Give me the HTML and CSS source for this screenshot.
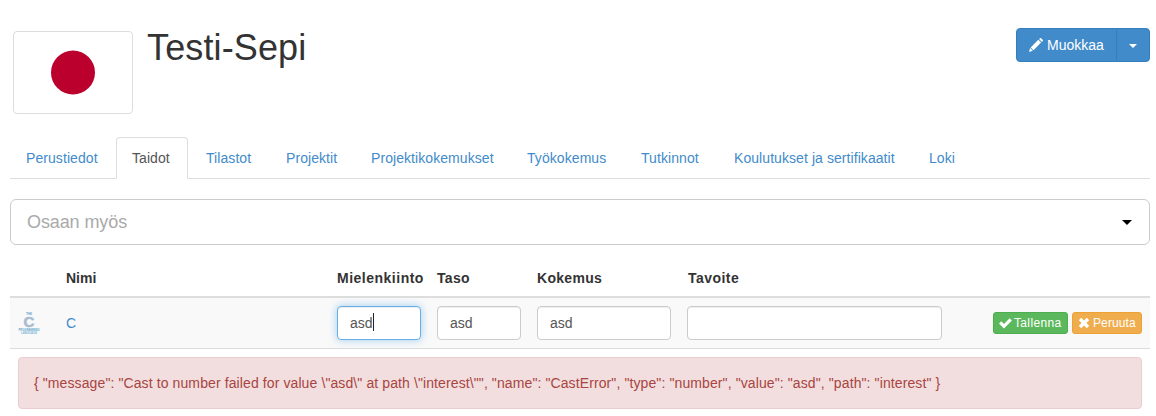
FILE: index.html
```html
<!DOCTYPE html>
<html lang="fi">
<head>
<meta charset="utf-8">
<title>Testi-Sepi</title>
<link rel="stylesheet" href="styles.css">
</head>
<body>
<main class="container">
  <header class="profile">
    <div class="thumbnail"><svg width="110" height="73" viewBox="0 0 110 73"><circle cx="55" cy="36.5" r="22" fill="#bc002d"/></svg></div>
    <h1 class="name">Testi-Sepi</h1>
    <div class="btn-group">
      <button class="btn btn-main"><svg class="pencil" width="14" height="14" viewBox="0 0 14 14"><path fill="#fff" d="M10.1 1.1 11 .2q.6-.4 1.1 0l1.7 1.7q.4.6 0 1.1l-.9.9zM9.3 1.8l2.8 2.8-7.6 7.6-2.8-2.8zM1.1 10.1l2.7 2.7-3.8 1.1z"/></svg><span>Muokkaa</span></button>
      <button class="btn btn-toggle" aria-label="Valikko"><span class="caret"></span></button>
    </div>
  </header>
  <nav class="tabs">
    <a class="tab t1">Perustiedot</a>
    <a class="tab t2 active">Taidot</a>
    <a class="tab t3">Tilastot</a>
    <a class="tab t4">Projektit</a>
    <a class="tab t5">Projektikokemukset</a>
    <a class="tab t6">Työkokemus</a>
    <a class="tab t7">Tutkinnot</a>
    <a class="tab t8">Koulutukset ja sertifikaatit</a>
    <a class="tab t9">Loki</a>
  </nav>
  <div class="select"><span>Osaan myös</span><svg width="10" height="5" viewBox="0 0 10 5"><path d="M0 0h10L5 5z"/></svg></div>
  <section class="skills">
    <div class="row head"><span></span><span class="h-name">Nimi</span><span class="h-interest">Mielenkiinto</span><span>Taso</span><span>Kokemus</span><span class="h-goal">Tavoite</span><span></span></div>
    <div class="row skill">
      <span class="logo"><svg width="22" height="22" viewBox="0 0 22 22"><g font-family="Liberation Sans, sans-serif" font-weight="bold" text-anchor="middle"><text x="11" y="3.2" font-size="3" fill="#5fa4cc">THE</text><text x="11" y="15.2" font-size="15" fill="#a9bdd2" stroke="#a9bdd2" stroke-width=".6">C</text><text x="11" y="18.6" font-size="3" textLength="21" lengthAdjust="spacingAndGlyphs" fill="#5fa4cc">PROGRAMMING</text><text x="11" y="21.6" font-size="3" textLength="16" lengthAdjust="spacingAndGlyphs" fill="#7bb4d5">LANGUAGE</text></g></svg></span>
      <span><a class="link">C</a></span>
      <span class="field"><span class="input focused">asd<i class="cursor"></i></span></span>
      <span class="field"><span class="input">asd</span></span>
      <span class="field"><span class="input">asd</span></span>
      <span class="field"><span class="input"></span></span>
      <span class="actions">
        <button class="btn-xs save"><svg width="13" height="12" viewBox="0 0 13 12"><path fill="#fff" d="M0 6.6 2.3 4.3 5 7 10.6 1.2 12.9 3.4 5 11.4z"/></svg><span>Tallenna</span></button>
        <button class="btn-xs cancel"><svg width="12" height="12" viewBox="0 0 12 12"><path fill="#fff" d="M.8 3.2 3.2.8 6 3.6 8.8.8l2.4 2.4L8.4 6l2.8 2.8-2.4 2.4L6 8.4l-2.8 2.8L.8 8.8 3.6 6z"/></svg><span>Peruuta</span></button>
      </span>
    </div>
    <div class="message-row"><div class="alert"><span>{ "message": "Cast to number failed for value \"asd\" at path \"interest\"", "name": "CastError", "type": "number", "value": "asd", "path": "interest" }</span></div></div>
  </section>
</main>
</body>
</html>
```
FILE: styles.css
```css
* { box-sizing: border-box; }
body {
  margin: 0;
  background: #fff;
  color: #333;
  font: 14px/20px "Liberation Sans", Arial, sans-serif;
}
button { font-family: inherit; margin: 0; }
.container { width: 1140px; margin: 0 6px 0 10px; padding-top: 28px; }
.profile { display: flex; align-items: flex-start; height: 109px; padding-left: 3px; }
.thumbnail { width: 120px; height: 83px; margin-top: 3px; padding: 4px; border: 1px solid #ddd; border-radius: 4px; }
.thumbnail svg { display: block; }
.name { margin: 0 0 0 14px; font-size: 36px; font-weight: 500; line-height: 39.6px; letter-spacing: .13px; }
.btn-group { display: flex; margin-left: auto; }
.btn {
  height: 34px;
  border: 1px solid #357ebd;
  background: #428bca;
  color: #fff;
  font-size: 14px;
  line-height: 20px;
  display: flex;
  align-items: center;
}
.btn-main { width: 101px; padding: 0 0 0 12px; border-radius: 4px 0 0 4px; gap: 4px; }
.btn-toggle { width: 34px; margin-left: -1px; padding: 0; justify-content: center; border-radius: 0 4px 4px 0; }
.caret { margin-top: 2px; border: 4px solid transparent; border-top-color: #fff; border-bottom: 0; }

.tabs { display: flex; gap: 2px; border-bottom: 1px solid #ddd; height: 42px; letter-spacing: .07px; }
.tab { height: 42px; padding: 10px 0 10px 15px; border: 1px solid transparent; color: #428bca; white-space: nowrap; }
.tab.active { border-color: #ddd; border-bottom-color: #fff; border-radius: 4px 4px 0 0; background: #fff; color: #555; }
.t1 { width: 104px; }
.t2 { width: 72px; }
.t3 { width: 78px; }
.t4 { width: 83px; }
.t5 { width: 154px; }
.t6 { width: 112px; }
.t7 { width: 91px; }
.t8 { width: 193px; }

.select {
  display: flex;
  align-items: center;
  justify-content: space-between;
  height: 46px;
  margin-top: 20px;
  padding: 0 17px 0 16px;
  border: 1px solid #ccc;
  border-radius: 6px;
  color: #aaa;
  font-size: 18px;
  letter-spacing: -.1px;
}
.select svg { fill: #000; }

.skills { margin-top: 15px; }
.row { display: grid; grid-template-columns: 48px 271px 100px 100px 150px 271px 200px; }
.row > span { padding: 8px; }
.head { height: 38px; border-bottom: 2px solid #ddd; font-weight: bold; letter-spacing: .3px; }
.head > span { white-space: nowrap; }
.head .h-name { letter-spacing: 0; }
.head .h-interest { letter-spacing: .5px; }
.head .h-goal { padding-left: 9px; letter-spacing: .45px; }
.skill { height: 50px; align-items: center; background: #f9f9f9; }
.logo svg { display: block; }
.link { color: #428bca; }
.input {
  display: flex;
  align-items: center;
  height: 34px;
  padding: 0 12px;
  border: 1px solid #ccc;
  border-radius: 4px;
  background: #fff;
  box-shadow: inset 0 1px 1px rgba(0, 0, 0, .075);
  color: #555;
}
.row .field:nth-child(5) .input { width: 134px; }
.row .field:nth-child(6) .input { width: 255px; }
.input.focused { border-color: #66afe9; box-shadow: inset 0 1px 1px rgba(0, 0, 0, .075), 0 0 8px rgba(102, 175, 233, .6); }
.cursor { width: 1px; height: 18px; margin-top: -2px; background: #222; }
.actions { display: flex; justify-content: flex-end; gap: 4px; }
.btn-xs {
  display: flex;
  align-items: center;
  height: 22px;
  padding: 0 0 0 5px;
  border: 1px solid;
  border-radius: 3px;
  color: #fff;
  font-size: 12px;
  line-height: 18px;
}
.save { width: 75px; gap: 2px; background: #5cb85c; border-color: #4cae4c; letter-spacing: .35px; }
.cancel { width: 70px; gap: 3px; background: #f0ad4e; border-color: #eea236; letter-spacing: .12px; }
.message-row { padding: 8px; border-top: 1px solid #ddd; }
.alert { height: 52px; padding: 15px; border: 1px solid #ebccd1; border-radius: 4px; background: #f2dede; color: #a94442; white-space: nowrap; letter-spacing: .104px; }
```
